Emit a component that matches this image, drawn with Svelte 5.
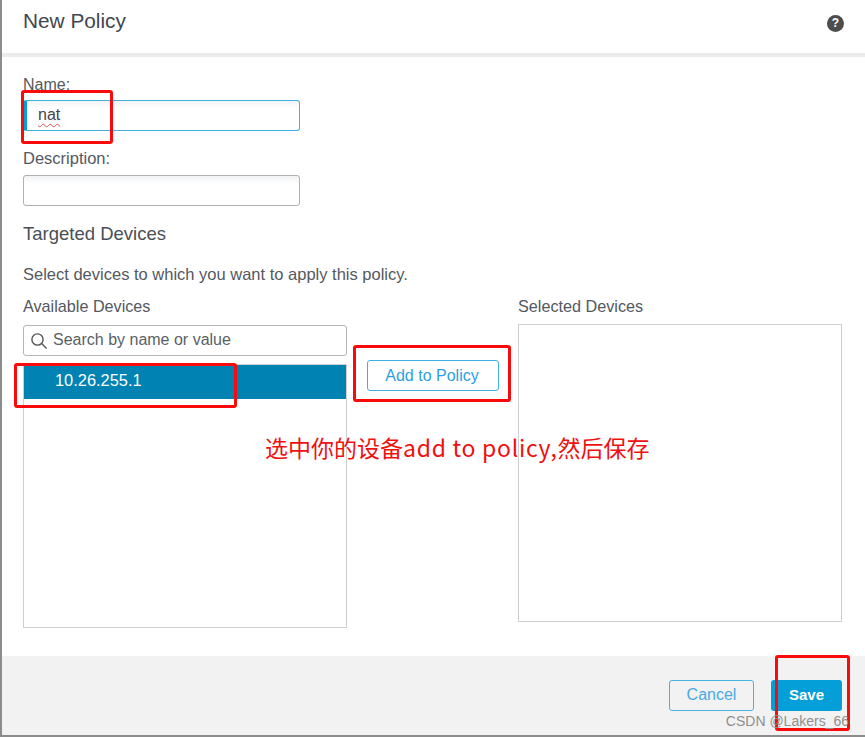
<script>
  let name = "nat";
  let description = "";
  let selected = ["10.26.255.1"];
</script>

<div class="dialog">
  <header class="head">
    <h1>New Policy</h1>
    <span class="help">?</span>
  </header>

  <div class="body">
    <label for="name">Name:</label>
    <div class="name-input">
      <span class="typed">{name}</span>
    </div>
    <label for="description" class="desc-label">Description:</label>
    <input id="description" class="desc-input" type="text" bind:value={description} />

    <h2>Targeted Devices</h2>
    <p class="hint">Select devices to which you want to apply this policy.</p>

    <div class="columns">
      <div class="available">
        <div class="col-title">Available Devices</div>
        <div class="search">
          <svg width="18" height="18" viewBox="0 0 18 18" fill="none" stroke="#555" stroke-width="1.4">
            <circle cx="7.5" cy="7.5" r="5.6" />
            <path d="M11.6 11.6 L16.6 16.6" />
          </svg>
          <span>Search by name or value</span>
        </div>
        <div class="list">
          {#each selected as device}
            <div class="row">{device}</div>
          {/each}
        </div>
      </div>

      <div class="middle">
        <button class="add">Add to Policy</button>
      </div>

      <div class="chosen">
        <div class="col-title">Selected Devices</div>
        <div class="chosen-list"></div>
      </div>
    </div>
  </div>

  <footer class="foot">
    <button class="cancel">Cancel</button>
    <button class="save">Save</button>
  </footer>

  <!-- annotations drawn on top of the screenshot -->
  <div class="mark m-name"></div>
  <div class="mark m-row"></div>
  <div class="mark m-add"></div>
  <div class="mark m-save"></div>
  <div class="note">选中你的设备<span class="latin">add to policy,</span>然后保存</div>
  <div class="watermark">CSDN @Lakers_66</div>
</div>

<style>
  :global(body) {
    margin: 0;
    background: #fff;
  }

  .dialog {
    position: relative;
    width: 865px;
    height: 737px;
    box-sizing: border-box;
    border-left: 2px solid #8c8c8c;
    display: flex;
    flex-direction: column;
    font-family: "Liberation Sans", Arial, sans-serif;
    color: #4a4f57;
    overflow: hidden;
  }

  .head {
    flex: none;
    box-sizing: border-box;
    padding: 10px 21px 0 21px;
    border-bottom: 4px solid #ececec;
    height: 57px;
    display: flex;
    justify-content: space-between;
  }

  h1 {
    margin: 0;
    font-size: 20.8px;
    line-height: 22px;
    font-weight: 400;
    color: #3f4650;
  }

  .help {
    width: 17px;
    height: 17px;
    margin: 5px 0 0 0;
    border-radius: 50%;
    background: #4d4d4d;
    color: #fff;
    font-size: 12px;
    font-weight: 700;
    line-height: 17px;
    text-align: center;
  }

  .body {
    flex: 1;
    padding: 19px 21px 0 21px;
  }

  label {
    display: block;
    font-size: 16px;
    line-height: 18px;
    color: #54585f;
  }

  .name-input {
    box-sizing: border-box;
    width: 277px;
    height: 31px;
    margin-top: 6px;
    border: 1px solid #3fb0e2;
    border-left: 4px solid #049fd9;
    border-radius: 3px;
    padding-left: 11px;
    background: linear-gradient(#f1f3f4, #fff 8px);
    font-size: 16px;
    line-height: 27px;
    color: #3f4650;
  }

  .typed {
    text-decoration: underline wavy #e05050 1px;
    text-underline-offset: 3px;
  }

  .desc-label {
    margin-top: 18px;
    font-size: 16.5px;
  }

  .desc-input {
    display: block;
    box-sizing: border-box;
    width: 277px;
    height: 31px;
    margin-top: 8px;
    border: 1px solid #b0b0b0;
    border-radius: 3px;
    background: linear-gradient(#f1f3f4, #fff 8px);
  }

  h2 {
    margin: 17px 0 0 0;
    font-size: 18.5px;
    line-height: 22px;
    font-weight: 400;
    color: #4a4f57;
  }

  .hint {
    margin: 20px 0 0 0;
    font-size: 16.5px;
    line-height: 18px;
    color: #54585f;
  }

  .columns {
    display: flex;
    margin-top: 14px;
  }

  .col-title {
    font-size: 16.2px;
    line-height: 18px;
    color: #54585f;
  }

  .available {
    width: 324px;
    flex: none;
  }

  .search {
    box-sizing: border-box;
    height: 31px;
    margin-top: 10px;
    border: 1px solid #b5b5b5;
    border-radius: 3px;
    display: flex;
    align-items: center;
    gap: 5px;
    padding-left: 6px;
    font-size: 16px;
    color: #5a5f66;
  }

  .search span {
    margin-bottom: 2px;
  }

  .list {
    box-sizing: border-box;
    height: 264px;
    margin-top: 8px;
    border: 1px solid #cfcfcf;
  }

  .row {
    height: 34px;
    box-sizing: border-box;
    padding-left: 31px;
    background: #0083b3;
    color: #fff;
    font-size: 16.4px;
    line-height: 30px;
  }

  .middle {
    width: 171px;
    flex: none;
    box-sizing: border-box;
    padding: 54px 0 0 20px;
  }

  button {
    font-family: inherit;
    font-size: 16px;
    border-radius: 3px;
    box-sizing: border-box;
  }

  .add {
    width: 132px;
    height: 31px;
    margin-top: 9px;
    padding: 0 2px 0 0;
    background: #fff;
    border: 1px solid #3fb0e2;
    color: #2d9fdc;
  }

  .chosen {
    width: 324px;
    flex: none;
  }

  .chosen-list {
    box-sizing: border-box;
    height: 298px;
    margin-top: 9px;
    border: 1px solid #cfcfcf;
  }

  .foot {
    flex: none;
    height: 81px;
    box-sizing: border-box;
    background: #f2f2f2;
    border-bottom: 2px solid #8c8c8c;
    display: flex;
    justify-content: flex-end;
    gap: 17px;
    padding: 24px 23px 0 0;
  }

  .cancel,
  .save {
    height: 31px;
    padding: 0 0 2px 0;
  }

  .cancel {
    width: 85px;
    background: transparent;
    border: 1px solid #49b1e4;
    color: #49a9e2;
  }

  .save {
    width: 71px;
    background: #049fd9;
    border: none;
    color: #fff;
    font-size: 15px;
    font-weight: 700;
  }

  .mark {
    position: absolute;
    box-sizing: border-box;
    border: 3px solid #fa0a0a;
    border-radius: 3px;
  }

  .m-name { left: 19px; top: 90px; width: 92px; height: 54px; }
  .m-row { left: 12px; top: 363px; width: 223px; height: 45px; }
  .m-add { left: 351px; top: 345px; width: 158px; height: 57px; }
  .m-save { left: 773px; top: 655px; width: 75px; height: 76px; }

  .note {
    position: absolute;
    left: 263px;
    top: 433px;
    font-family: "Noto Sans CJK SC", "Noto Sans", sans-serif;
    font-size: 23px;
    line-height: 28px;
    color: #f01010;
    white-space: nowrap;
  }

  .latin {
    letter-spacing: 0.72px;
  }

  .watermark {
    position: absolute;
    right: 16px;
    top: 713px;
    font-size: 14px;
    line-height: 16px;
    color: #8f8f8f;
  }
</style>
